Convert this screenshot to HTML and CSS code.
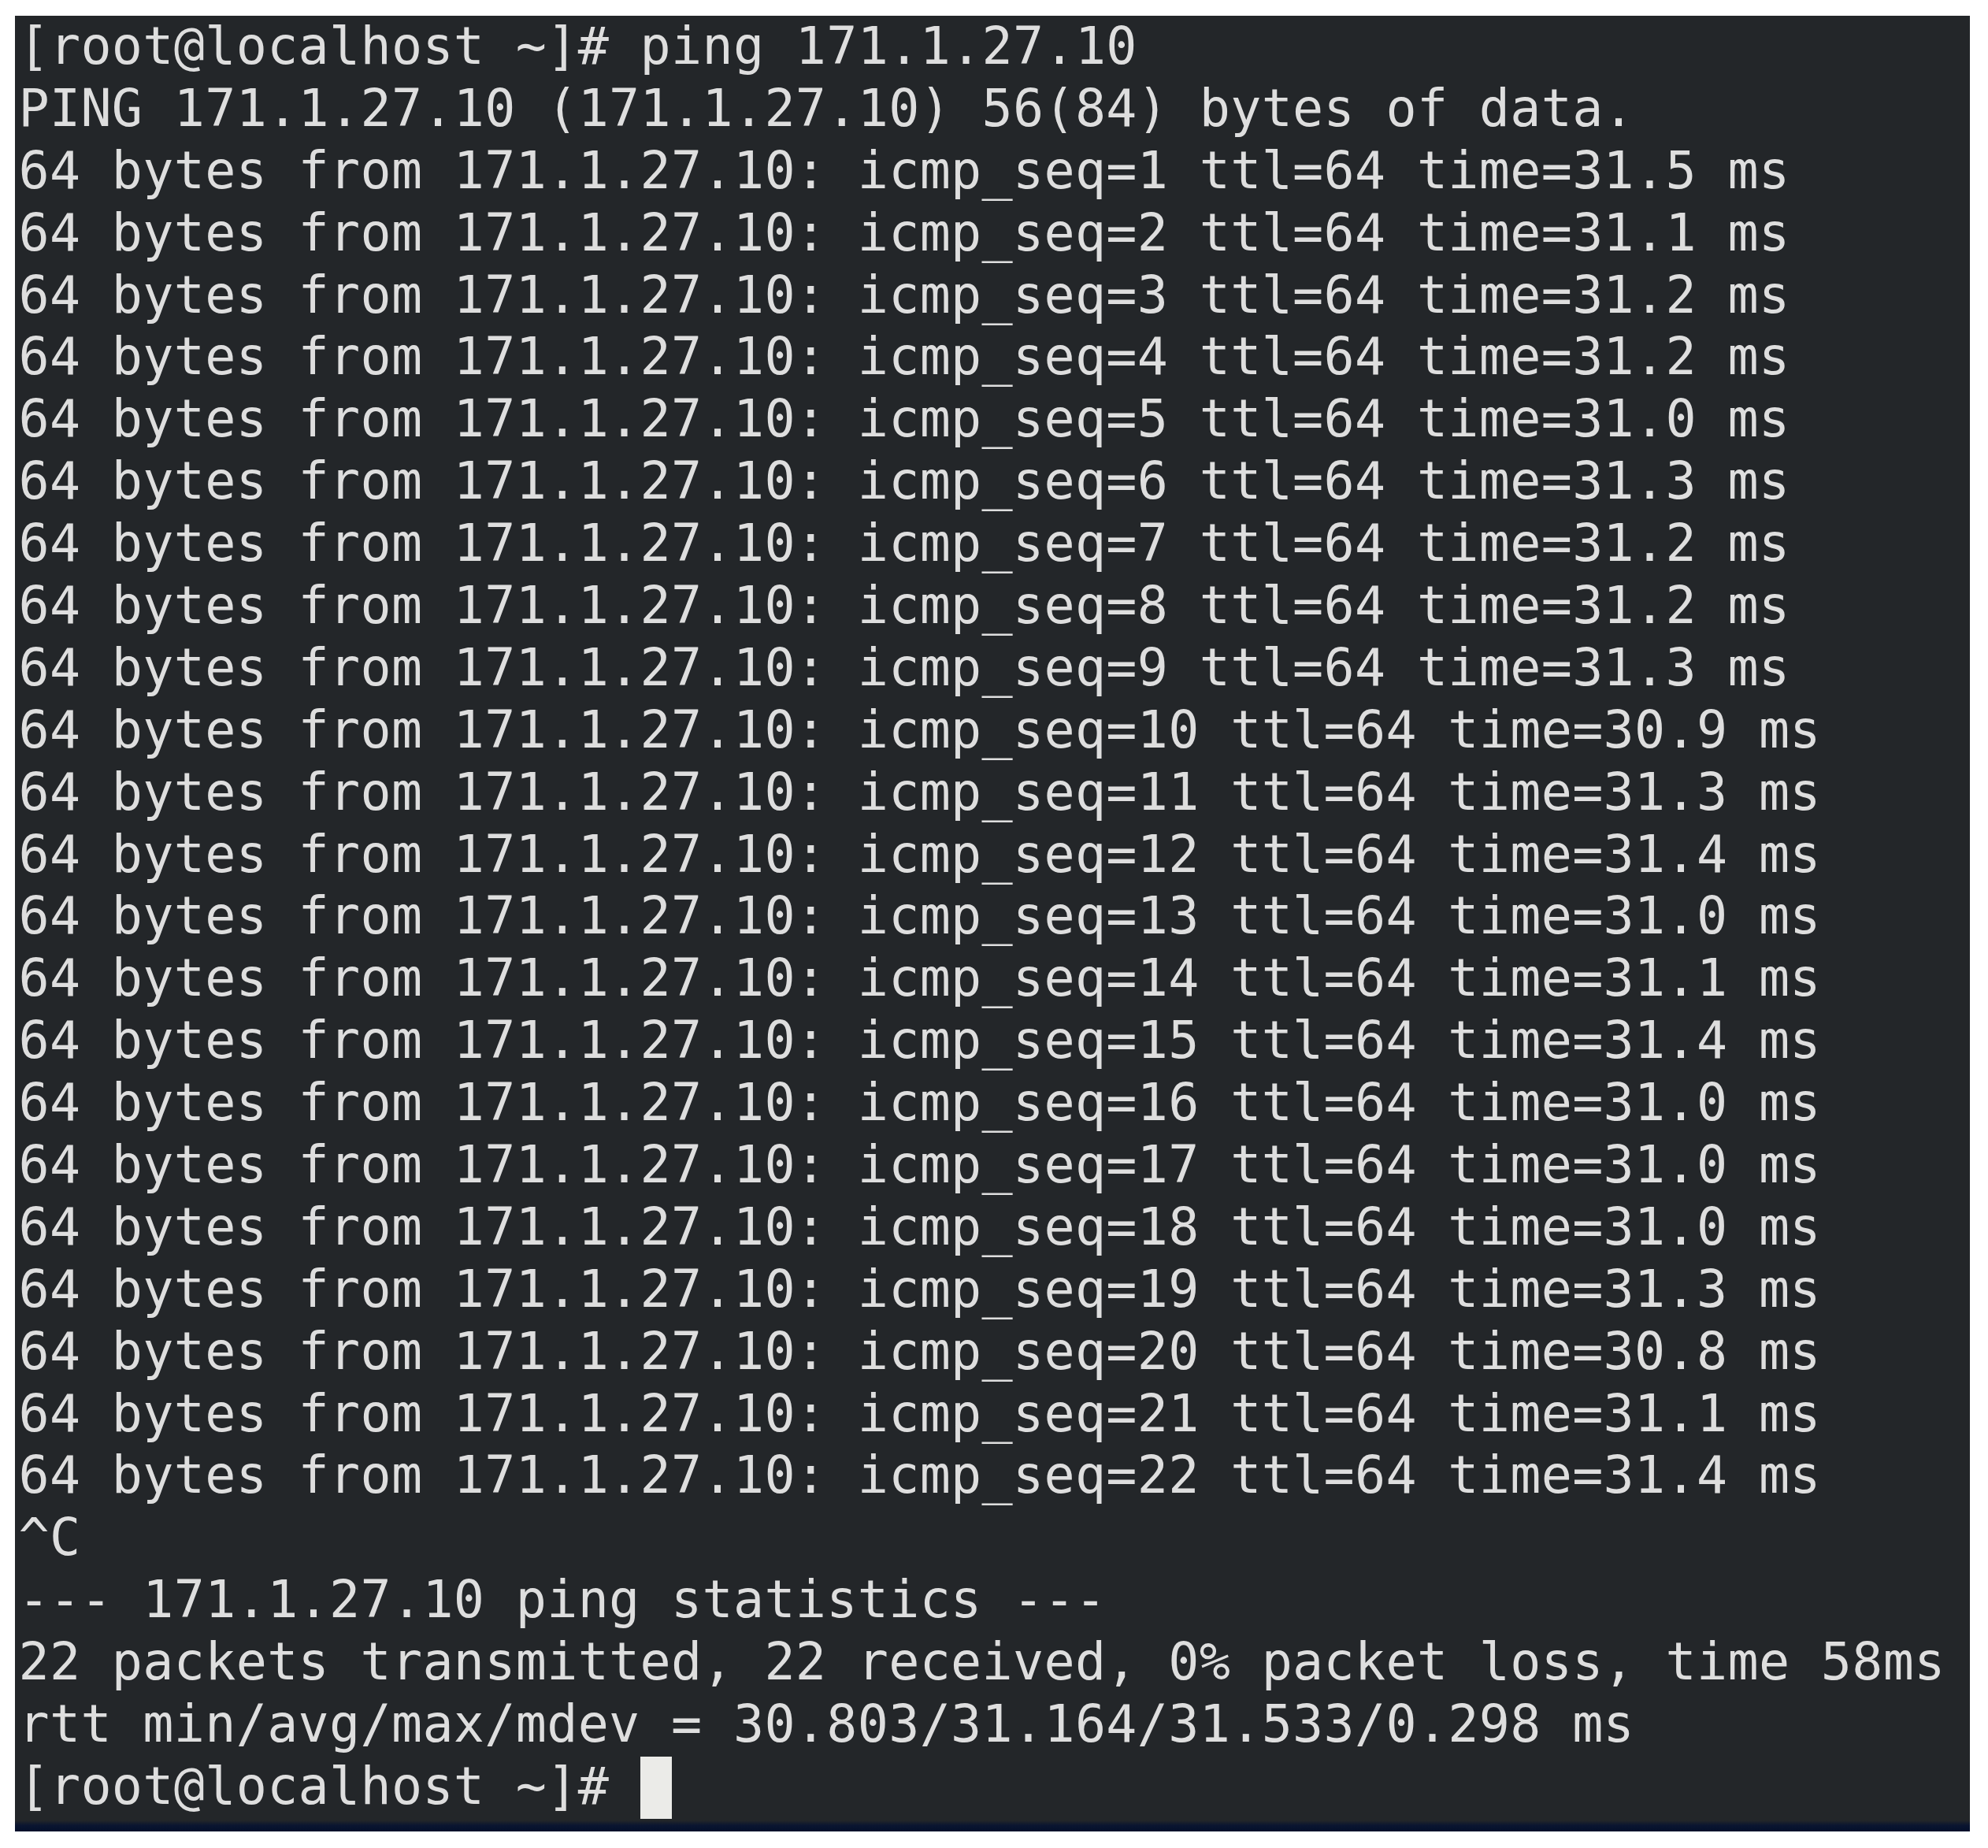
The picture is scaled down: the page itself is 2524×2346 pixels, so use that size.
FILE: index.html
```html
<!DOCTYPE html>
<html lang="en">
<head>
<meta charset="utf-8">
<title>ping 171.1.27.10</title>
<link rel="stylesheet" href="styles.css">
</head>
<body>
<div class="terminal">
  <div class="screen">
    <div class="line">[root@localhost ~]# ping 171.1.27.10</div>
    <div class="line">PING 171.1.27.10 (171.1.27.10) 56(84) bytes of data.</div>
    <div class="line">64 bytes from 171.1.27.10: icmp_seq=1 ttl=64 time=31.5 ms</div>
    <div class="line">64 bytes from 171.1.27.10: icmp_seq=2 ttl=64 time=31.1 ms</div>
    <div class="line">64 bytes from 171.1.27.10: icmp_seq=3 ttl=64 time=31.2 ms</div>
    <div class="line">64 bytes from 171.1.27.10: icmp_seq=4 ttl=64 time=31.2 ms</div>
    <div class="line">64 bytes from 171.1.27.10: icmp_seq=5 ttl=64 time=31.0 ms</div>
    <div class="line">64 bytes from 171.1.27.10: icmp_seq=6 ttl=64 time=31.3 ms</div>
    <div class="line">64 bytes from 171.1.27.10: icmp_seq=7 ttl=64 time=31.2 ms</div>
    <div class="line">64 bytes from 171.1.27.10: icmp_seq=8 ttl=64 time=31.2 ms</div>
    <div class="line">64 bytes from 171.1.27.10: icmp_seq=9 ttl=64 time=31.3 ms</div>
    <div class="line">64 bytes from 171.1.27.10: icmp_seq=10 ttl=64 time=30.9 ms</div>
    <div class="line">64 bytes from 171.1.27.10: icmp_seq=11 ttl=64 time=31.3 ms</div>
    <div class="line">64 bytes from 171.1.27.10: icmp_seq=12 ttl=64 time=31.4 ms</div>
    <div class="line">64 bytes from 171.1.27.10: icmp_seq=13 ttl=64 time=31.0 ms</div>
    <div class="line">64 bytes from 171.1.27.10: icmp_seq=14 ttl=64 time=31.1 ms</div>
    <div class="line">64 bytes from 171.1.27.10: icmp_seq=15 ttl=64 time=31.4 ms</div>
    <div class="line">64 bytes from 171.1.27.10: icmp_seq=16 ttl=64 time=31.0 ms</div>
    <div class="line">64 bytes from 171.1.27.10: icmp_seq=17 ttl=64 time=31.0 ms</div>
    <div class="line">64 bytes from 171.1.27.10: icmp_seq=18 ttl=64 time=31.0 ms</div>
    <div class="line">64 bytes from 171.1.27.10: icmp_seq=19 ttl=64 time=31.3 ms</div>
    <div class="line">64 bytes from 171.1.27.10: icmp_seq=20 ttl=64 time=30.8 ms</div>
    <div class="line">64 bytes from 171.1.27.10: icmp_seq=21 ttl=64 time=31.1 ms</div>
    <div class="line">64 bytes from 171.1.27.10: icmp_seq=22 ttl=64 time=31.4 ms</div>
    <div class="line">^C</div>
    <div class="line">--- 171.1.27.10 ping statistics ---</div>
    <div class="line">22 packets transmitted, 22 received, 0% packet loss, time 58ms</div>
    <div class="line">rtt min/avg/max/mdev = 30.803/31.164/31.533/0.298 ms</div>
    <div class="line">[root@localhost ~]# <span class="cursor"></span></div>
  </div>
  <div class="band"></div>
</div>
</body>
</html>
```

FILE: styles.css
```css
html, body {
  margin: 0;
  padding: 0;
  background: #ffffff;
}

.terminal {
  margin: 20px 0 0 19px;
  width: 2482px;
  background: #232629;
}

.screen {
  padding: 0 0 3px 4.5px;
  font-family: "DejaVu Sans Mono", "Liberation Mono", monospace;
  font-size: 65px;
  letter-spacing: 0.32px;
  line-height: 78.9px;
  color: #dedede;
}

.line {
  white-space: pre;
  height: 78.9px;
}

.cursor {
  display: inline-block;
  width: 40px;
  height: 79px;
  vertical-align: -19px;
  background: #ebebe8;
}

.band {
  height: 14px;
  background: linear-gradient(#232629 0%, #0a1530 45%, #04102b 100%);
}
```
